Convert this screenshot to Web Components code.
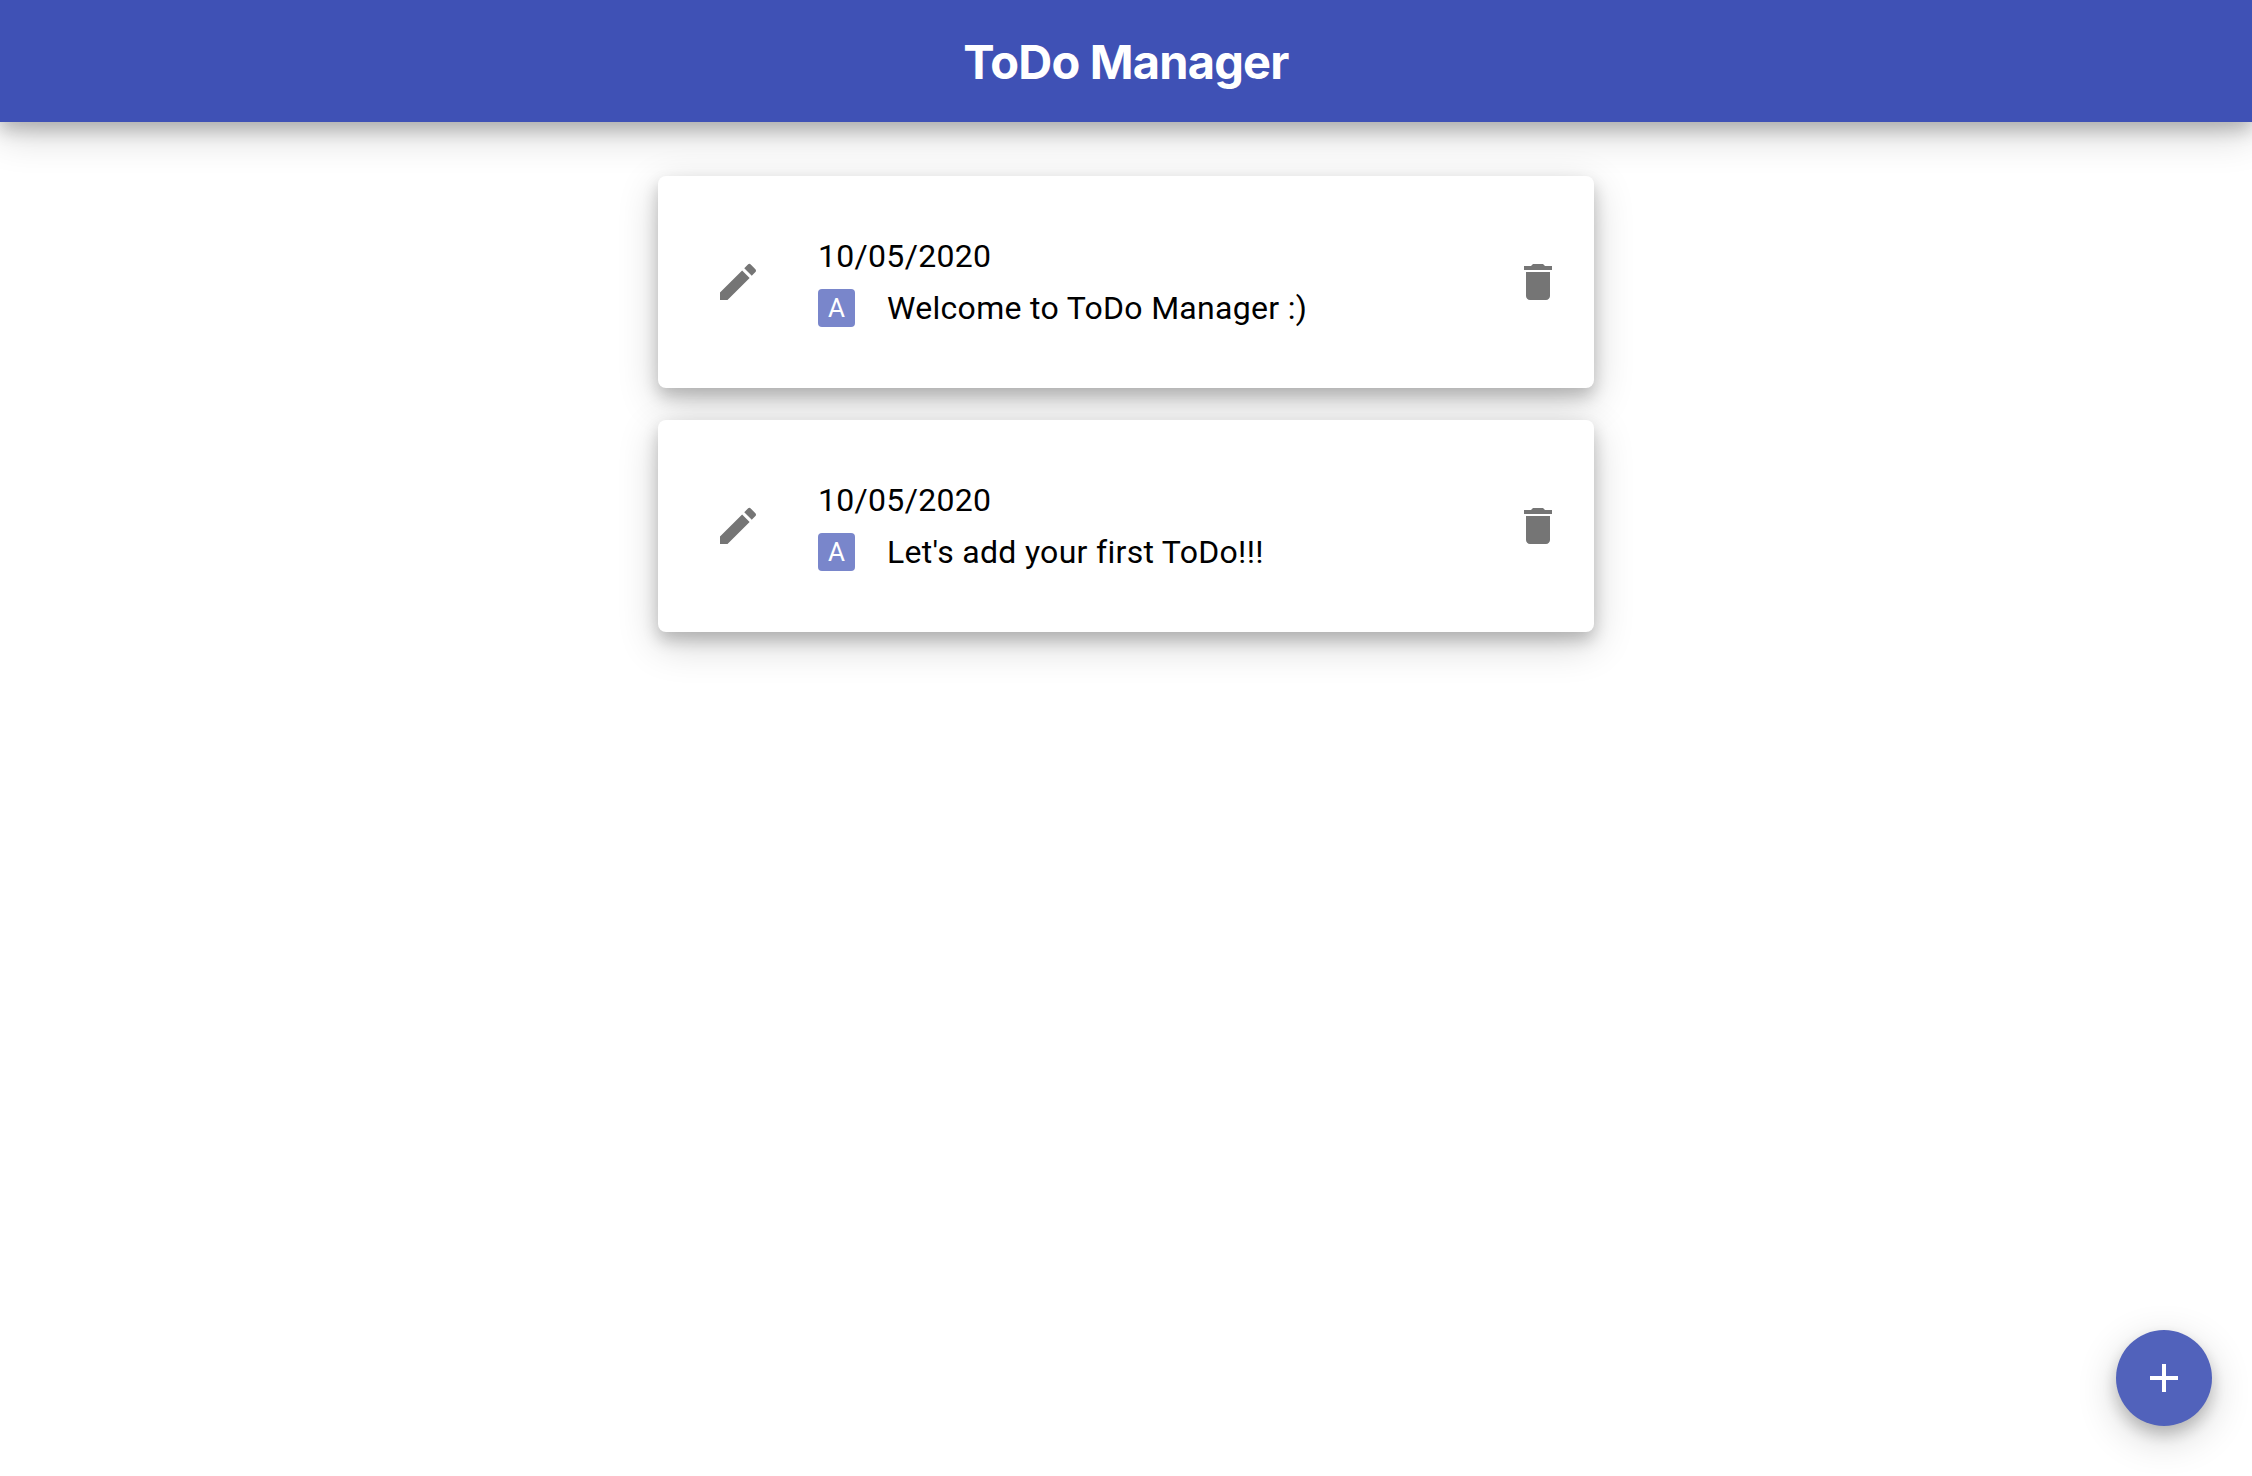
<!DOCTYPE html>
<html lang="en">
<head>
<meta charset="utf-8">
<title>ToDo Manager</title>
<style>
  :root { --shadow: 0 8px 16px 0 rgba(0,0,0,.2), 0 12px 40px 0 rgba(0,0,0,.19); }
  html, body { margin: 0; height: 100%; background: #fff; overflow: hidden; }
</style>
</head>
<body>
<todo-app></todo-app>
<script>
const define = (name, html) => customElements.define(name, class extends HTMLElement {
  constructor() {
    super();
    this.attachShadow({ mode: 'open' }).innerHTML = html;
  }
});

define('app-header', `<style>
  :host { display: flex; justify-content: center; align-items: center; height: 122px; background: #3f51b5; box-shadow: var(--shadow); }
  h1 { margin: 0; padding-top: 2px; font: 700 47px/56px Inter, sans-serif; letter-spacing: -0.8px; color: #fff; white-space: nowrap; }
</style><h1><slot></slot></h1>`);

define('edit-icon', `<style>:host,svg { display: block; width: 48px; height: 48px; fill: #757575; }</style>
<svg viewBox="0 0 24 24"><path d="M3 17.25V21h3.75L17.81 9.94l-3.75-3.75L3 17.25zM20.71 7.04c.39-.39.39-1.02 0-1.41l-2.34-2.34a.9959.9959 0 0 0-1.41 0l-1.83 1.83 3.75 3.75 1.83-1.83z"/></svg>`);

define('delete-icon', `<style>:host,svg { display: block; width: 48px; height: 48px; fill: #757575; }</style>
<svg viewBox="0 0 24 24"><path d="M6 19c0 1.100.9 2 2 2h8c1.100 0 2-.9 2-2V7H6v12zM19 4h-3.500l-1-1h-5l-1 1H5v2h14V4z"/></svg>`);

define('priority-badge', `<style>
  :host { display: flex; justify-content: center; align-items: center; box-sizing: border-box; width: 37px; height: 38px; border-radius: 4px; background: #7986cb; color: #fff; font: 400 26px/38px Roboto, sans-serif; letter-spacing: 0; }
</style><slot></slot>`);

define('todo-card', `<style>
  :host { display: flex; align-items: center; box-sizing: border-box; width: 936px; height: 212px; padding: 0 32px 0 56px; border-radius: 8px; background: #fff; box-shadow: var(--shadow); }
  .body { flex: 1; display: flex; flex-direction: column; gap: 4px; margin-left: 56px; font: 400 32px/48px Roboto, sans-serif; letter-spacing: .00938em; color: #000; }
  .line { display: flex; align-items: center; gap: 32px; }
</style>
<edit-icon></edit-icon>
<div class="body"><div><slot name="date"></slot></div>
<div class="line"><priority-badge>A</priority-badge><span><slot></slot></span></div></div>
<delete-icon></delete-icon>`);

define('add-button', `<style>
  :host { position: fixed; right: 40px; bottom: 50px; display: flex; justify-content: center; align-items: center; width: 96px; height: 96px; border-radius: 50%; background: #5162bb; box-shadow: var(--shadow); }
  svg { width: 48px; height: 48px; fill: #fff; }
</style><svg viewBox="0 0 24 24"><path d="M19 13h-6v6h-2v-6H5v-2h6V5h2v6h6v2z"/></svg>`);

define('todo-app', `<style>
  :host { display: flex; flex-direction: column; height: 100%; }
  main { display: flex; flex-direction: column; align-items: center; gap: 32px; padding-top: 54px; }
</style>
<app-header>ToDo Manager</app-header>
<main>
  <todo-card><span slot="date">10/05/2020</span>Welcome to ToDo Manager :)</todo-card>
  <todo-card><span slot="date">10/05/2020</span>Let's add your first ToDo!!!</todo-card>
</main>
<add-button></add-button>`);
</script>
</body>
</html>
